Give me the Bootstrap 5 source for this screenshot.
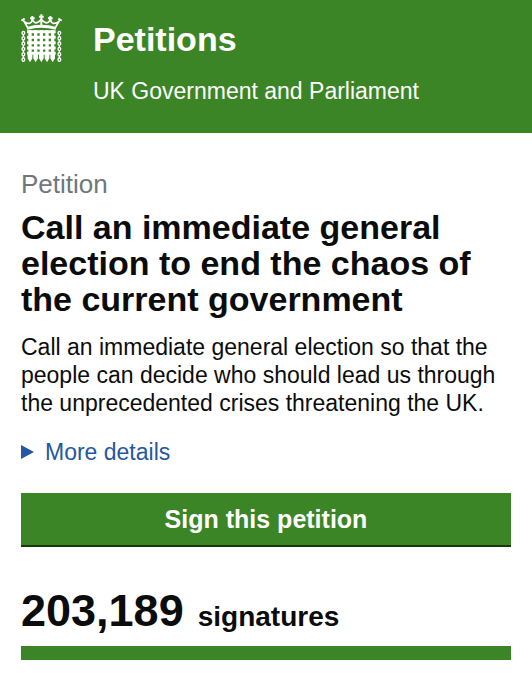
<!DOCTYPE html>
<html lang="en">
<head>
<meta charset="utf-8">
<meta name="viewport" content="width=device-width, initial-scale=1">
<title>Petitions - UK Government and Parliament</title>
<link rel="stylesheet" href="https://cdn.jsdelivr.net/npm/bootstrap@5.3.0/dist/css/bootstrap.min.css">
<style>
  :root { --green: #3c8526; --ink: #0b0c0c; --gutter: 21px; }
  body { font-family: "Liberation Sans", Arial, sans-serif; font-size: 23px; line-height: 28px; color: var(--ink); background: #fff; }
  .page-gutter { padding-left: var(--gutter); padding-right: var(--gutter); }
  .site-header { background: var(--green); padding-top: 14px; padding-bottom: 28px; }
  .crest { width: 41px; height: 49px; margin-right: 31px; }
  .site-name { font-size: 34px; line-height: 36px; margin: 7px 0 20px; }
  .main-block { padding-top: 35px; padding-bottom: 20px; }
  .kicker { font-size: 26px; line-height: 32px; color: #6f777b; }
  .petition-title { font-size: 34px; line-height: 36px; margin: 9px 0 16px; }
  .more summary { color: #2458a0; list-style: none; gap: 11px; }
  .more summary::-webkit-details-marker { display: none; }
  .more svg { width: 13px; height: 14px; }
  .more[open] svg { transform: rotate(90deg); }
  .more { margin: 21px 0 27px; }
  .btn-sign { --bs-btn-color: #fff; --bs-btn-hover-color: #fff; --bs-btn-bg: var(--green); --bs-btn-hover-bg: #327020; font-size: 25px; line-height: 28px; padding: 12px; border: 0; border-bottom: 2px solid #163a0a; }
  .signature-count { margin: 39px 0 4px; gap: 14px; line-height: 50px; font-size: 28px; }
  .count-number { font-size: 45px; }
  .signature-bar { --bs-progress-height: 14px; --bs-progress-bar-bg: var(--green); }
</style>
</head>
<body>
<header class="site-header page-gutter d-flex align-items-start text-white">
  <svg class="crest flex-shrink-0" viewBox="33 27 123 147" fill="none" stroke="#fff" aria-hidden="true">
    <!-- crown -->
    <path d="M51 70Q94 57 138 70" stroke-width="9"/>
    <path d="M52 66L39 44M137 66L150 44M42 49Q62 64 67 43Q74 64 94 43Q114 64 121 43Q126 64 147 49" stroke-width="5"/>
    <path d="M87 35H101M94 28V60M60 40H74M67 33V48M114 40H128M121 33V48M34 47L44 41M145 41L155 47" stroke-width="6"/>
    <!-- portcullis -->
    <path d="M60 76V162M77 76V162M94 76V162M111 76V162M128 76V162" stroke-width="10"/>
    <path d="M51 80H137M51 97H137M51 113H137M51 129H137M51 145H137" stroke-width="9"/>
    <path d="M53 148H67V160L60 172L53 160ZM70 148H84V160L77 172L70 160ZM87 148H101V160L94 172L87 160ZM104 148H118V160L111 172L104 160ZM121 148H135V160L128 172L121 160Z" fill="#fff" stroke="none"/>
    <!-- chains -->
    <g stroke-width="4">
      <path id="chain" d="M40 79a4 5 0 1 0 .1 0M40 95a4 5 0 1 0 .1 0M40 111a4 5 0 1 0 .1 0M40 127a4 5 0 1 0 .1 0M40 143a4 5 0 1 0 .1 0M40 159a4 5 0 1 0 .1 0M40 89V95M40 105V111M40 121V127M40 137V143M40 153V159"/>
      <use href="#chain" x="108"/>
    </g>
  </svg>
  <div>
    <h1 class="site-name fw-bold"><a class="text-white text-decoration-none" href="#">Petitions</a></h1>
    <p class="mb-0">UK Government and Parliament</p>
  </div>
</header>
<main class="main-block page-gutter">
  <p class="kicker mb-0">Petition</p>
  <h2 class="petition-title fw-bold">Call an immediate general election to end the chaos of the current government</h2>
  <p class="mb-0">Call an immediate general election so that the people can decide who should lead us through the unprecedented crises threatening the UK.</p>
  <details class="more">
    <summary class="d-flex align-items-center"><svg viewBox="0 0 13 14" aria-hidden="true"><path d="M0 0L13 7L0 14Z" fill="currentColor"/></svg>More details</summary>
  </details>
  <button type="button" class="btn btn-sign w-100 rounded-0 fw-bold">Sign this petition</button>
  <p class="signature-count d-flex align-items-baseline fw-bold"><span class="count-number">203,189</span> <span>signatures</span></p>
  <div class="progress signature-bar rounded-0" role="progressbar" aria-label="Signatures towards debate threshold" aria-valuenow="100" aria-valuemin="0" aria-valuemax="100"><div class="progress-bar w-100"></div></div>
</main>
<script src="https://cdn.jsdelivr.net/npm/bootstrap@5.3.0/dist/js/bootstrap.bundle.min.js"></script>
</body>
</html>
